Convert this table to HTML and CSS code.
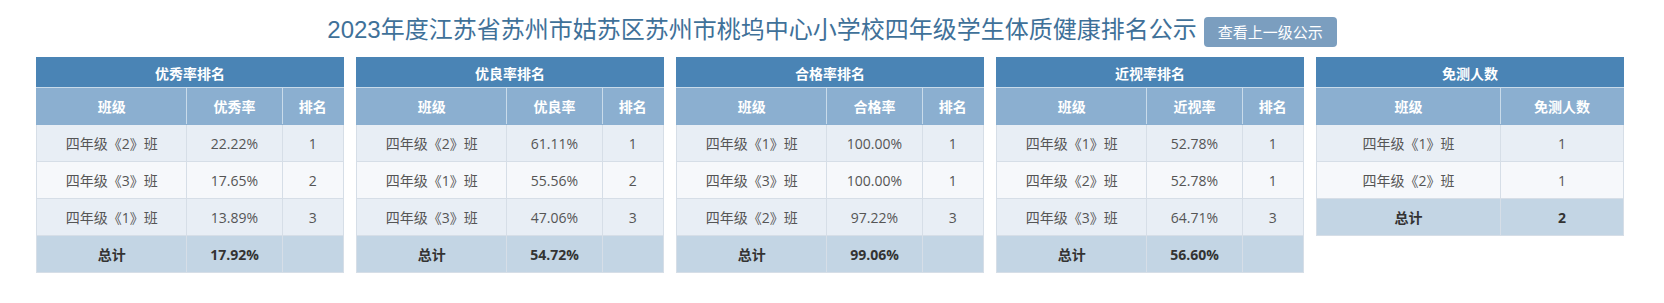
FILE: index.html
```html
<!DOCTYPE html>
<html lang="zh-CN">
<head>
<meta charset="utf-8">
<title>体质健康排名公示</title>
<link rel="stylesheet" href="styles.css">
</head>
<body>
<div class="header">
  <h1 class="title">2023年度江苏省苏州市姑苏区苏州市桃坞中心小学校四年级学生体质健康排名公示</h1>
  <a class="btn">查看上一级公示</a>
</div>
<div class="boards">
  <div class="col">
    <table class="rank">
      <colgroup><col class="c1"><col class="c2"><col class="c3"></colgroup>
      <thead>
        <tr class="cap"><th colspan="3">优秀率排名</th></tr>
        <tr class="head"><th>班级</th><th>优秀率</th><th>排名</th></tr>
      </thead>
      <tbody>
        <tr class="odd"><td>四年级《2》班</td><td>22.22%</td><td>1</td></tr>
        <tr class="even"><td>四年级《3》班</td><td>17.65%</td><td>2</td></tr>
        <tr class="odd"><td>四年级《1》班</td><td>13.89%</td><td>3</td></tr>
        <tr class="total"><td>总计</td><td>17.92%</td><td></td></tr>
      </tbody>
    </table>
  </div>
  <div class="col">
    <table class="rank">
      <colgroup><col class="c1"><col class="c2"><col class="c3"></colgroup>
      <thead>
        <tr class="cap"><th colspan="3">优良率排名</th></tr>
        <tr class="head"><th>班级</th><th>优良率</th><th>排名</th></tr>
      </thead>
      <tbody>
        <tr class="odd"><td>四年级《2》班</td><td>61.11%</td><td>1</td></tr>
        <tr class="even"><td>四年级《1》班</td><td>55.56%</td><td>2</td></tr>
        <tr class="odd"><td>四年级《3》班</td><td>47.06%</td><td>3</td></tr>
        <tr class="total"><td>总计</td><td>54.72%</td><td></td></tr>
      </tbody>
    </table>
  </div>
  <div class="col">
    <table class="rank">
      <colgroup><col class="c1"><col class="c2"><col class="c3"></colgroup>
      <thead>
        <tr class="cap"><th colspan="3">合格率排名</th></tr>
        <tr class="head"><th>班级</th><th>合格率</th><th>排名</th></tr>
      </thead>
      <tbody>
        <tr class="odd"><td>四年级《1》班</td><td>100.00%</td><td>1</td></tr>
        <tr class="even"><td>四年级《3》班</td><td>100.00%</td><td>1</td></tr>
        <tr class="odd"><td>四年级《2》班</td><td>97.22%</td><td>3</td></tr>
        <tr class="total"><td>总计</td><td>99.06%</td><td></td></tr>
      </tbody>
    </table>
  </div>
  <div class="col">
    <table class="rank">
      <colgroup><col class="c1"><col class="c2"><col class="c3"></colgroup>
      <thead>
        <tr class="cap"><th colspan="3">近视率排名</th></tr>
        <tr class="head"><th>班级</th><th>近视率</th><th>排名</th></tr>
      </thead>
      <tbody>
        <tr class="odd"><td>四年级《1》班</td><td>52.78%</td><td>1</td></tr>
        <tr class="even"><td>四年级《2》班</td><td>52.78%</td><td>1</td></tr>
        <tr class="odd"><td>四年级《3》班</td><td>64.71%</td><td>3</td></tr>
        <tr class="total"><td>总计</td><td>56.60%</td><td></td></tr>
      </tbody>
    </table>
  </div>
  <div class="col">
    <table class="rank">
      <colgroup><col class="w1"><col class="w2"></colgroup>
      <thead>
        <tr class="cap"><th colspan="2">免测人数</th></tr>
        <tr class="head"><th>班级</th><th>免测人数</th></tr>
      </thead>
      <tbody>
        <tr class="odd"><td>四年级《1》班</td><td>1</td></tr>
        <tr class="even"><td>四年级《2》班</td><td>1</td></tr>
        <tr class="total"><td>总计</td><td>2</td></tr>
      </tbody>
    </table>
  </div>
</div>
</body>
</html>
```
FILE: styles.css
```css
html, body {
  margin: 0;
  padding: 0;
  background: #ffffff;
}
body {
  font-family: "Open Sans", "Noto Sans CJK SC", sans-serif;
  font-size: 14px;
  color: #555555;
}
.header {
  display: flex;
  justify-content: center;
  align-items: center;
  gap: 7px;
  height: 57px;
  padding-top: 2px;
  box-sizing: border-box;
}
.title {
  margin: 0;
  font-family: "Liberation Sans", "Noto Sans CJK SC", sans-serif;
  font-size: 24px;
  font-weight: normal;
  line-height: 30px;
  color: #3f7199;
}
.btn {
  display: block;
  height: 30px;
  line-height: 30px;
  padding: 0 14px;
  border-radius: 4px;
  background: #7b9ebf;
  color: #ffffff;
  font-family: "Noto Sans CJK SC", sans-serif;
  font-size: 15px;
  margin-top: 4px;
}
.boards {
  display: grid;
  grid-template-columns: repeat(5, 1fr);
  width: 1600px;
  margin-left: 30px;
}
.col {
  padding: 0 6px;
}
.rank {
  width: 100%;
  border-collapse: collapse;
  table-layout: fixed;
  text-align: center;
}
.rank th, .rank td {
  padding: 0;
  border: 1px solid #d6dee7;
}
.cap th {
  height: 29px;
  background: #4a84b5;
  color: #ffffff;
  font-family: "Noto Sans CJK SC", sans-serif;
  font-weight: bold;
  font-size: 14px;
  border-color: #4a84b5;
  border-bottom-color: #c9dbea;
}
.head th {
  height: 36px;
  background: #8bafd0;
  color: #ffffff;
  font-family: "Noto Sans CJK SC", sans-serif;
  font-weight: bold;
  font-size: 14px;
  border-color: #8bafd0;
  border-left-color: #c9dbea;
  border-right-color: #c9dbea;
}
.head th:first-child { border-left-color: #8bafd0; }
.head th:last-child { border-right-color: #8bafd0; }
.c1 { width: 49%; }
.c2 { width: 31%; }
.c3 { width: 20%; }
.w1 { width: 60%; }
.w2 { width: 40%; }
.rank td {
  height: 36px;
}
.odd td { background: #e8eef5; }
.even td { background: #f6f8fb; }
.total td {
  background: #c3d5e4;
  color: #333333;
  font-weight: bold;
}
```
